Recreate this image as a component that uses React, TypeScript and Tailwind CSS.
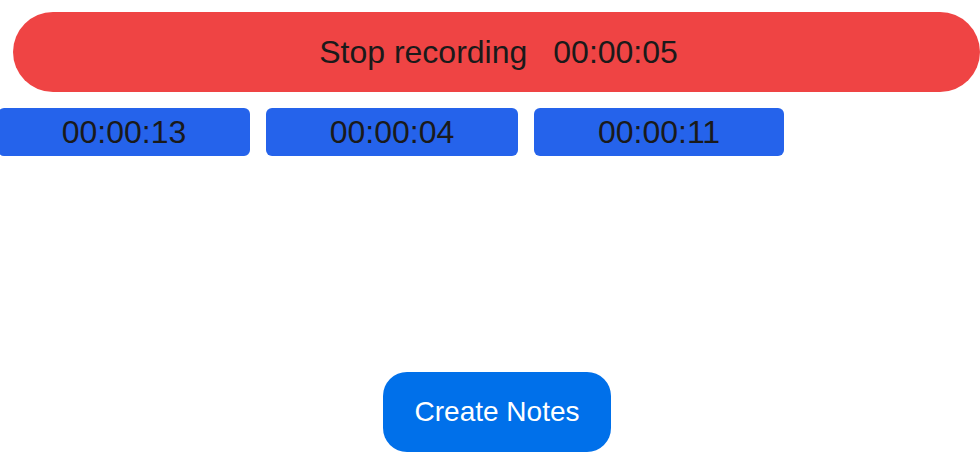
import React from 'react'

const clips = [
    { time: '00:00:13', w: 'w-[252px]' },
    { time: '00:00:04', w: 'w-[252px]' },
    { time: '00:00:11', w: 'w-[250px]' },
]

export default function App() {
    return (
        <div className="w-[980px] h-[460px] bg-white overflow-hidden font-['Liberation_Sans',Arial,sans-serif]">
            {/* RECORD BUTTON */}
            <div className="pt-3 pl-[13px]">
                <button className="w-[967px] h-20 rounded-full bg-[#ef4444] text-[#1a1a1a] text-[32px] flex items-center justify-center gap-[26px] pl-1">
                    <span>Stop recording</span>
                    <span>00:00:05</span>
                </button>
            </div>

            {/* CLIPS */}
            <div className="flex gap-4 mt-4 -ml-[2px]">
                {clips.map((c) => (
                    <div key={c.time} className={`${c.w} h-12 rounded-md bg-[#2563eb] text-[#1a1a1a] text-[32px] flex items-center justify-center`}>
                        {c.time}
                    </div>
                ))}
            </div>

            {/* CREATE NOTES */}
            <div className="flex justify-center mt-[216px] pl-[14px]">
                <button className="h-20 px-8 rounded-3xl bg-[#0070ea] text-white text-[28px]">
                    Create Notes
                </button>
            </div>
        </div>
    )
}
